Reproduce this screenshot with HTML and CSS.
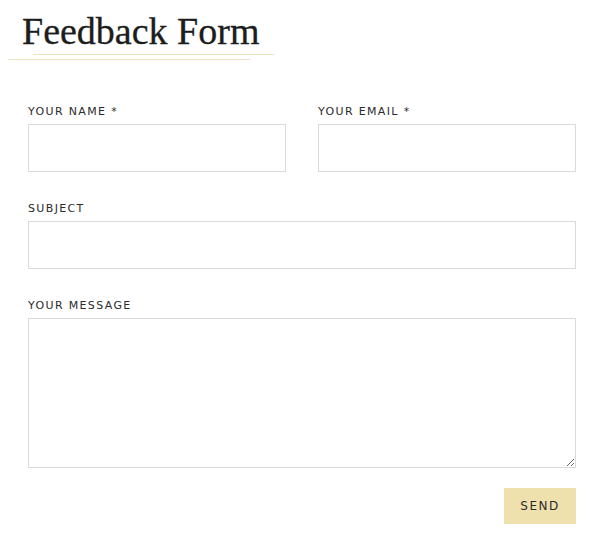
FILE: index.html
```html
<!DOCTYPE html>
<html lang="en">
<head>
<meta charset="utf-8">
<title>Feedback Form</title>
<link rel="stylesheet" href="styles.css">
</head>
<body>
<header class="heading">
  <h1 class="title">Feedback Form</h1>
  <div class="line line-top"></div>
  <div class="line line-bottom"></div>
</header>
<form class="form">
  <div class="row two">
    <div class="field">
      <label class="label" for="name">Your Name *</label>
      <input class="input" id="name" type="text">
    </div>
    <div class="field">
      <label class="label" for="email">Your Email *</label>
      <input class="input" id="email" type="email">
    </div>
  </div>
  <div class="field">
    <label class="label" for="subject">Subject</label>
    <input class="input" id="subject" type="text">
  </div>
  <div class="field">
    <label class="label" for="message">Your Message</label>
    <textarea class="input textarea" id="message"></textarea>
  </div>
  <div class="actions">
    <button class="send" type="button">Send</button>
  </div>
</form>
</body>
</html>
```
FILE: styles.css
```css
* { box-sizing: border-box; }
html, body { margin: 0; background: #fff; }
body { font-family: "DejaVu Sans", sans-serif; color: #333; }

.heading { padding-top: 9px; }
.title {
  margin: 0 0 0 22px;
  font-family: "Liberation Serif", serif;
  font-weight: 400;
  font-size: 38px;
  line-height: 44px;
  color: #1d1d1d;
  -webkit-text-stroke: 0.3px #1d1d1d;
}
.line { height: 1px; background: #ece3c0; }
.line-top { margin: 1px 0 0 33px; width: 241px; }
.line-bottom { margin: 4px 0 0 8px; width: 242px; }

.form {
  width: 548px;
  margin: 43px 0 0 28px;
  display: flex;
  flex-direction: column;
  gap: 28px;
}
.row.two {
  display: grid;
  grid-template-columns: 1fr 1fr;
  column-gap: 32px;
}
.field { display: flex; flex-direction: column; }
.label {
  font-size: 11px;
  line-height: 14px;
  padding-top: 2px;
  letter-spacing: 1.35px;
  text-transform: uppercase;
  color: #2b2b2b;
  margin-bottom: 5px;
}
.input {
  height: 48px;
  border: 1px solid #dadada;
  border-radius: 0;
  background: #fff;
  font: inherit;
  padding: 8px 12px;
  outline: none;
}
.textarea { height: 150px; resize: vertical; }
.actions { display: flex; justify-content: flex-end; margin-top: -8px; }
.send {
  width: 72px;
  height: 36px;
  border: 0;
  background: #efe1ae;
  color: #2b2b2b;
  font-family: "DejaVu Sans", sans-serif;
  font-size: 12px;
  letter-spacing: 1.5px;
  text-transform: uppercase;
  padding: 0;
}
```
